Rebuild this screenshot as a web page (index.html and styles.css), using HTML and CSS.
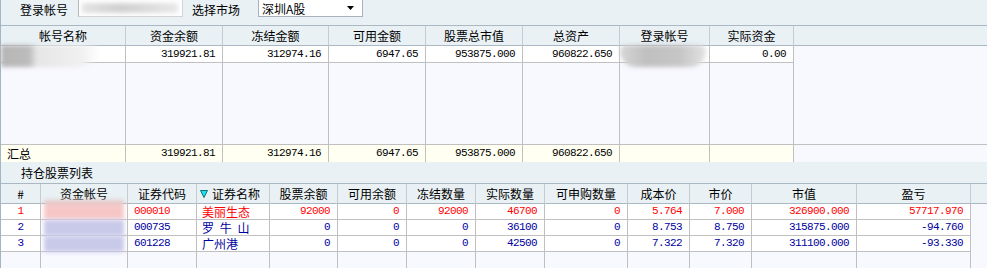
FILE: index.html
```html
<!DOCTYPE html>
<html lang="zh">
<head>
<meta charset="utf-8">
<title>持仓</title>
<link rel="stylesheet" href="styles.css">
</head>
<body>
<div class="app">
  <div class="toolbar">
    <span class="lbl">登录帐号</span>
    <span class="inputbox"><span class="smudge"></span></span>
    <span class="lbl lbl2">选择市场</span>
    <span class="select"><span>深圳A股</span><svg class="caret" width="7" height="4" viewBox="0 0 7 4"><polygon points="0,0 7,0 3.5,4" fill="#000"/></svg></span>
  </div>

  <div class="grid g1">
    <div class="c h">帐号名称</div>
    <div class="c h">资金余额</div>
    <div class="c h">冻结金额</div>
    <div class="c h">可用金额</div>
    <div class="c h">股票总市值</div>
    <div class="c h">总资产</div>
    <div class="c h">登录帐号</div>
    <div class="c h">实际资金</div>
    <div class="c h end"></div>

    <div class="c w"><span class="blob blob-name"></span></div>
    <div class="c w n">319921.81</div>
    <div class="c w n">312974.16</div>
    <div class="c w n">6947.65</div>
    <div class="c w n">953875.000</div>
    <div class="c w n">960822.650</div>
    <div class="c w"><span class="blob blob-login"></span></div>
    <div class="c w n">0.00</div>
    <div class="c l end nb"></div>

    <div class="c l"></div>
    <div class="c l"></div>
    <div class="c l"></div>
    <div class="c l"></div>
    <div class="c l"></div>
    <div class="c l"></div>
    <div class="c l"></div>
    <div class="c l"></div>
    <div class="c l end"></div>

    <div class="c y t sum nb">汇总</div>
    <div class="c y n nb">319921.81</div>
    <div class="c y n nb">312974.16</div>
    <div class="c y n nb">6947.65</div>
    <div class="c y n nb">953875.000</div>
    <div class="c y n nb">960822.650</div>
    <div class="c y nb"></div>
    <div class="c y nb"></div>
    <div class="c l end nb"></div>
  </div>

  <div class="section">持仓股票列表</div>

  <div class="grid g2">
    <div class="c h">#</div>
    <div class="c h">资金帐号</div>
    <div class="c h">证券代码</div>
    <div class="c h hs"><svg class="sort" width="8" height="8" viewBox="0 0 8 8"><polygon points="0.5,0.5 7.5,0.5 4,7.5" fill="#19e3ec" stroke="#14707c" stroke-width="1"/></svg>证券名称</div>
    <div class="c h">股票余额</div>
    <div class="c h">可用余额</div>
    <div class="c h">冻结数量</div>
    <div class="c h">实际数量</div>
    <div class="c h">可申购数量</div>
    <div class="c h">成本价</div>
    <div class="c h">市价</div>
    <div class="c h">市值</div>
    <div class="c h">盈亏</div>
    <div class="c h end"></div>

    <div class="c w r idx red">1</div>
    <div class="c w r"><span class="blob blob-pink"></span></div>
    <div class="c w r code red">000010</div>
    <div class="c w r t red">美丽生态</div>
    <div class="c w r n red">92000</div>
    <div class="c w r n red">0</div>
    <div class="c w r n red">92000</div>
    <div class="c w r n red">46700</div>
    <div class="c w r n red">0</div>
    <div class="c w r n red">5.764</div>
    <div class="c w r n red">7.000</div>
    <div class="c w r n red">326900.000</div>
    <div class="c w r n red">57717.970</div>
    <div class="c l end nb"></div>

    <div class="c w r idx blue">2</div>
    <div class="c w r"><span class="blob blob-lav"></span></div>
    <div class="c w r code blue">000735</div>
    <div class="c w r t blue spaced">罗 牛 山</div>
    <div class="c w r n blue">0</div>
    <div class="c w r n blue">0</div>
    <div class="c w r n blue">0</div>
    <div class="c w r n blue">36100</div>
    <div class="c w r n blue">0</div>
    <div class="c w r n blue">8.753</div>
    <div class="c w r n blue">8.750</div>
    <div class="c w r n blue">315875.000</div>
    <div class="c w r n blue">-94.760</div>
    <div class="c l end nb"></div>

    <div class="c w r idx blue">3</div>
    <div class="c w r"><span class="blob blob-lav"></span></div>
    <div class="c w r code blue">601228</div>
    <div class="c w r t blue">广州港</div>
    <div class="c w r n blue">0</div>
    <div class="c w r n blue">0</div>
    <div class="c w r n blue">0</div>
    <div class="c w r n blue">42500</div>
    <div class="c w r n blue">0</div>
    <div class="c w r n blue">7.322</div>
    <div class="c w r n blue">7.320</div>
    <div class="c w r n blue">311100.000</div>
    <div class="c w r n blue">-93.330</div>
    <div class="c l end nb"></div>

    <div class="c l nb"></div>
    <div class="c l nb"></div>
    <div class="c l nb"></div>
    <div class="c l nb"></div>
    <div class="c l nb"></div>
    <div class="c l nb"></div>
    <div class="c l nb"></div>
    <div class="c l nb"></div>
    <div class="c l nb"></div>
    <div class="c l nb"></div>
    <div class="c l nb"></div>
    <div class="c l nb"></div>
    <div class="c l nb"></div>
    <div class="c l end nb"></div>
  </div>
</div>
</body>
</html>
```
FILE: styles.css
```css
* { box-sizing: border-box; }
html, body { margin: 0; padding: 0; }
body {
  width: 987px;
  height: 268px;
  overflow: hidden;
  background: #f8f8ff;
  color: #000;
  font-family: "Noto Sans CJK SC", "Noto Sans", sans-serif;
  font-size: 12px;
}
.app {
  height: 268px;
  border-left: 1px solid #a6b5c2;
  background: #f8f8ff;
  display: flex;
  flex-direction: column;
}

/* toolbar */
.toolbar {
  height: 25px;
  flex: none;
  background: #e9f1f5;
  display: flex;
  align-items: flex-start;
  padding-left: 19px;
  line-height: 17px;
}
.lbl { padding-top: 1px; white-space: nowrap; }
.lbl2 { margin-left: 9px; }
.inputbox {
  margin-left: 10px;
  width: 105px;
  height: 17px;
  background: #fff;
  border-left: 1px solid #b8b8b8;
  border-right: 1px solid #d4d4d4;
  border-bottom: 1px solid #d4d4d4;
  display: flex;
  align-items: center;
  overflow: hidden;
}
.smudge {
  display: block;
  width: 96px;
  height: 10px;
  margin-left: 3px;
  background: linear-gradient(to right, #e4e4e4, #d0d0d0 40%, #dcdcdc 70%, #e8e8e8);
  filter: blur(2px);
}
.select {
  margin-left: 18px;
  width: 105px;
  height: 17px;
  background: #fff;
  border: 1px solid #a9b1ba;
  border-top: none;
  display: flex;
  align-items: center;
  justify-content: space-between;
  padding-left: 3px;
  padding-right: 8px;
  line-height: 15px;
  white-space: nowrap;
}
.caret { display: block; }

/* section title */
.section {
  flex: none;
  height: 21px;
  background: #e9f1f5;
  padding-left: 20px;
  line-height: 21px;
  white-space: nowrap;
}

/* grids */
.grid { display: grid; flex: none; }
.g1 {
  grid-template-columns: 125px 97px 106px 97px 97px 97px 90px 84px 1fr;
  grid-template-rows: 20px 17px 82px 17px;
  border-top: 1px solid #aab8c3;
}
.g2 {
  flex: 1;
  grid-template-columns: 40px 87px 69px 73px 68px 69px 69px 69px 83px 62px 62px 105px 114px 1fr;
  grid-template-rows: 20px 16px 16px 16px 1fr;
  border-top: 1px solid #aab8c3;
}
.c {
  border-right: 1px solid #c0c0c0;
  border-bottom: 1px solid #c0c0c0;
  white-space: nowrap;
  line-height: 16px;
  min-width: 0;
}
.h {
  background: #e9f1f5;
  text-align: center;
  line-height: 19px;
  border-bottom-color: #aab8c3;
  border-right-color: #c6cdd2;
}
.hs {
  text-align: left;
  padding-left: 3px;
  display: flex;
  align-items: center;
}
.sort { display: block; margin-right: 4px; flex: none; }
.w { background: #fff; }
.y { background: #fffff2; }
.l { background: #f8f8ff; }
.end { border-right: none; }
.nb { border-bottom: none; }
.n, .idx, .code {
  font-family: "Liberation Mono", monospace;
  font-size: 11px;
  letter-spacing: -0.6px;
  line-height: 16px;
}
.n { text-align: right; padding-right: 7px; }
.r.n, .r.idx, .r.code { line-height: 15px; }
.t { padding-left: 5px; }
.sum { padding-left: 6px; line-height: 17px; }
.r { line-height: 15px; }
.idx { text-align: center; }
.code { padding-left: 6px; }
.spaced { word-spacing: 3px; }
.red { color: #ff0000; }
.blue { color: #0000a0; }

/* redaction smudges */
.blob { display: block; filter: blur(2px); }
.blob-name {
  width: 100px;
  height: 22px;
  margin-top: -1px;
  background: linear-gradient(to right, #b6b6b6 0, #bcbcbc 28px, #e6e6e6 36px, #f0f0f0 80px, rgba(248,248,255,0) 100px);
  border-radius: 0 0 30px 0;
}
.blob-login {
  width: 86px;
  height: 22px;
  margin-top: -1px;
  background: linear-gradient(to right, #d6d6d6, #c0c0c0 30%, #c6c6c6 70%, #e2e2e2);
  border-radius: 8px 8px 20px 20px;
}
.blob-pink {
  width: 80px;
  height: 19px;
  margin: -4px 0 0 3px;
  background: linear-gradient(to bottom, #d8c8c8, #f7c9c9 30%, #f6c4c4);
}
.blob-lav {
  width: 80px;
  height: 16px;
  margin-left: 3px;
  background: #c9c9ea;
}
```
